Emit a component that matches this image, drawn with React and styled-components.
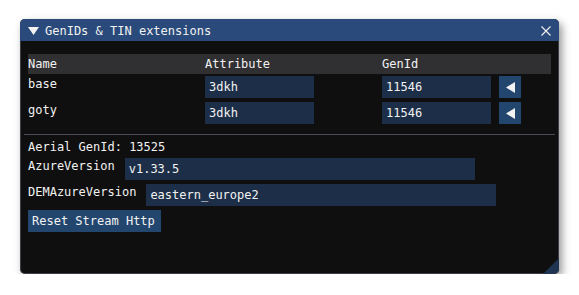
import React from 'react';
import styled, { createGlobalStyle } from 'styled-components';

const Global = createGlobalStyle`
  html, body { margin: 0; padding: 0; background: #ffffff; }
  body {
    font-family: "DejaVu Sans Mono", "Liberation Mono", monospace;
    font-size: 12px;
  }
`;

const Page = styled.div`
  padding: 19px 0 0 20px;
`;

const Window = styled.div`
  position: relative;
  width: 539px;
  height: 255px;
  box-sizing: border-box;
  display: flex;
  flex-direction: column;
  background: #0f0f0f;
  color: #f2f2f2;
  border-radius: 5px;
  overflow: hidden;
  box-shadow: inset 0 0 0 1px rgba(110, 110, 128, 0.5), 3px 4px 8px rgba(0, 0, 0, 0.42);
`;

const TitleBar = styled.div`
  height: 22px;
  flex: none;
  display: flex;
  align-items: flex-start;
  padding: 0 8px;
  background: #294a7a;
`;

const Collapse = styled.div`
  width: 17px;
  padding-top: 8px;
  display: flex;
`;

const TitleText = styled.div`
  padding-top: 4px;
  line-height: 17px;
  height: 16px;
  white-space: pre;
`;

const Close = styled.div`
  margin-left: auto;
  padding-top: 7px;
  display: flex;
`;

const Body = styled.div`
  flex: 1;
  display: flex;
  flex-direction: column;
  padding: 13px 8px 0;
`;

const HeaderRow = styled.div`
  display: grid;
  grid-template-columns: 177px 177px 1fr;
  height: 20px;
  box-sizing: border-box;
  padding-top: 2px;
  margin-bottom: 2px;
  background: #303033;
`;

const Cell = styled.div`
  line-height: 17px;
  height: 16px;
  white-space: pre;
`;

const Rows = styled.div`
  display: flex;
  flex-direction: column;
  gap: 4px;
`;

const Row = styled.div`
  display: grid;
  grid-template-columns: 177px 177px 1fr;
  align-items: start;
`;

const FieldCell = styled.div`
  display: flex;
  gap: 8px;
`;

const Field = styled.div`
  width: ${(p) => p.$w}px;
  height: 22px;
  box-sizing: border-box;
  padding: 3px 4px 0;
  line-height: 17px;
  background: #1d2e48;
  white-space: pre;
  overflow: hidden;
`;

const ArrowButton = styled.div`
  width: 22px;
  height: 22px;
  background: #23466f;
  display: flex;
  align-items: center;
  justify-content: center;
`;

const Separator = styled.div`
  height: 1px;
  background: #4b4b57;
  margin: 10px -4px 3px;
`;

const Stack = styled.div`
  display: flex;
  flex-direction: column;
  gap: 4px;
  align-items: flex-start;
`;

const InfoText = styled.div`
  height: 16px;
  line-height: 18px;
  white-space: pre;
`;

const LabeledRow = styled.div`
  display: flex;
  gap: 10px;
  align-items: flex-start;
`;

const Label = styled.div`
  height: 16px;
  line-height: 17px;
  white-space: pre;
`;

const Button = styled.div`
  height: 22px;
  box-sizing: border-box;
  padding: 3px 6px 0 4px;
  line-height: 17px;
  background: #23466f;
  white-space: pre;
`;

const Grip = styled.svg`
  position: absolute;
  right: 0;
  bottom: 0;
`;

const DownArrow = () => (
  <svg width="11" height="8" viewBox="0 0 11 8">
    <polygon points="0,0 11,0 5.5,8" fill="#f2f2f2" />
  </svg>
);

const CloseIcon = () => (
  <svg width="10" height="10" viewBox="0 0 10 10">
    <path d="M0.5 0.5 L9.5 9.5 M9.5 0.5 L0.5 9.5" stroke="#f2f2f2" strokeWidth="1.1" fill="none" />
  </svg>
);

const LeftArrow = () => (
  <svg width="9" height="11" viewBox="0 0 9 11">
    <polygon points="9,0 9,11 0,5.5" fill="#f2f2f2" />
  </svg>
);

const rows = [
  { name: 'base', attr: '3dkh', gen: '11546' },
  { name: 'goty', attr: '3dkh', gen: '11546' },
];

export default function App() {
  return (
    <>
      <Global />
      <Page>
        <Window>
          <TitleBar>
            <Collapse>
              <DownArrow />
            </Collapse>
            <TitleText>GenIDs &amp; TIN extensions</TitleText>
            <Close>
              <CloseIcon />
            </Close>
          </TitleBar>
          <Body>
            <HeaderRow>
              <Cell>Name</Cell>
              <Cell>Attribute</Cell>
              <Cell>GenId</Cell>
            </HeaderRow>
            <Rows>
              {rows.map((r) => (
                <Row key={r.name}>
                  <Cell>{r.name}</Cell>
                  <FieldCell>
                    <Field $w={109}>{r.attr}</Field>
                  </FieldCell>
                  <FieldCell>
                    <Field $w={109}>{r.gen}</Field>
                    <ArrowButton>
                      <LeftArrow />
                    </ArrowButton>
                  </FieldCell>
                </Row>
              ))}
            </Rows>
            <Separator />
            <Stack>
              <InfoText>Aerial GenId: 13525</InfoText>
              <LabeledRow>
                <Label>AzureVersion</Label>
                <Field $w={350}>v1.33.5</Field>
              </LabeledRow>
              <LabeledRow>
                <Label>DEMAzureVersion</Label>
                <Field $w={350}>eastern_europe2</Field>
              </LabeledRow>
              <Button>Reset Stream Http</Button>
            </Stack>
          </Body>
          <Grip width="16" height="16" viewBox="0 0 16 16">
            <polygon points="16,0 16,16 0,16" fill="#1e3450" />
          </Grip>
        </Window>
      </Page>
    </>
  );
}
